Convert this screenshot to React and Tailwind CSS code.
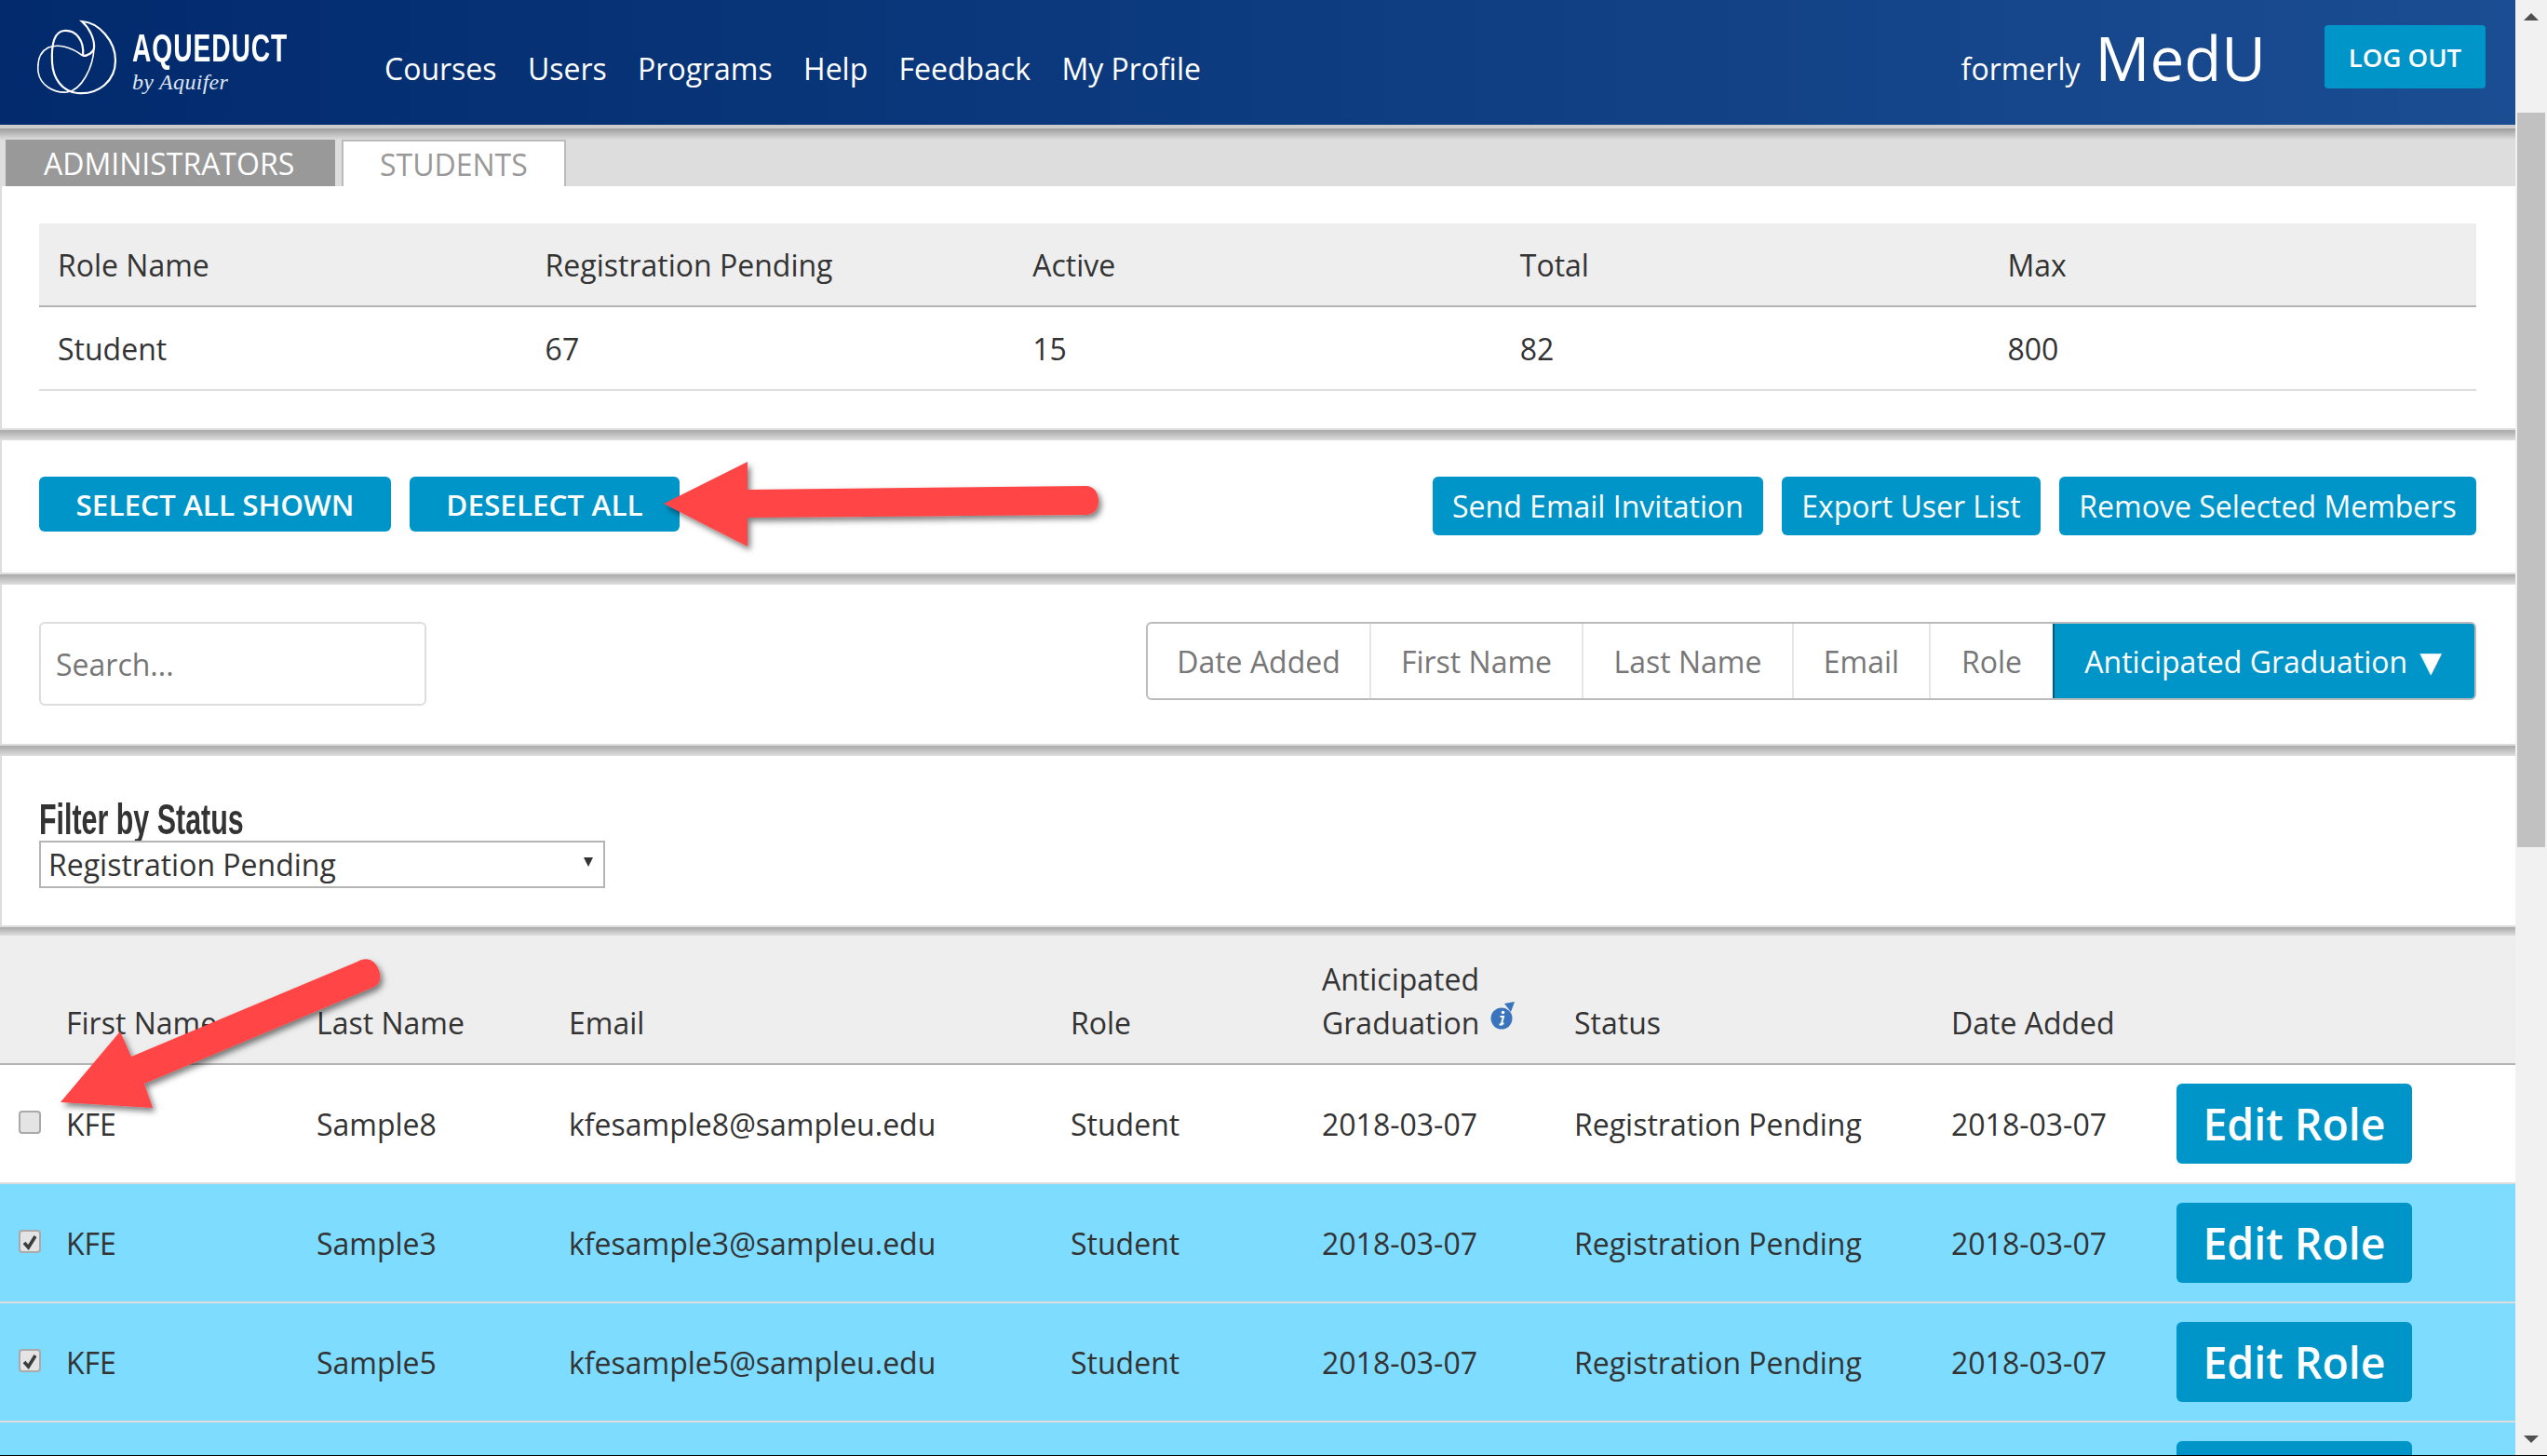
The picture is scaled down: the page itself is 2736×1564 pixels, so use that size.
import React from "react";

const Gap = ({ h = "h-[11px]" }) => (
  <div className={`${h} bg-gradient-to-b from-[#a9a9a9] to-[#dedede]`} />
);

const Panel = ({ className = "", children }) => (
  <section className={`bg-white border-l-2 border-b-2 border-[#dddddd] ${className}`}>{children}</section>
);

const Logo = () => (
  <div className="flex items-start w-[373px] ml-[40px] pt-[20px] h-full">
    <svg width="88" height="84" viewBox="40 18 88 84" className="shrink-0" fill="none" stroke="#ffffff" aria-hidden="true">
      <path d="M89 58 C91 41 81 30 69 31 C58 32 55 46 56 65 C57 83 67 96 83 98 C106 100 124 85 124 63 C124 42 106 22 88 21 C96 28 102 40 101 50 C100 54 95 58 89 58" strokeWidth="2.2" />
      <path d="M89 58 C76 48 62 45 52 49 C42 54 40 65 41 75 C43 90 58 98 72 97 C88 95 100 70 101 50" strokeWidth="1.6" />
    </svg>
    <div className="ml-[14px] text-white">
      <div className="font-['Liberation_Sans',sans-serif] font-bold text-[43px] leading-[44px] mt-[9px] tracking-[1.4px] whitespace-nowrap origin-left scale-x-[0.656]">AQUEDUCT</div>
      <div className="font-['Liberation_Serif',serif] italic text-[24px] leading-[30px] tracking-[0.3px] text-[#dfe6f2] whitespace-nowrap">by Aquifer</div>
    </div>
  </div>
);

const Header = () => (
  <header className="h-[134px] bg-gradient-to-r from-[#022a6d] to-[#1b4d92] flex text-white">
    <Logo />
    <nav className="flex gap-[33.3px] pt-[50px] leading-[47px]">
      {["Courses", "Users", "Programs", "Help", "Feedback", "My Profile"].map((n) => (
        <a key={n} className="whitespace-nowrap">{n}</a>
      ))}
    </nav>
    <div className="ml-auto flex items-start pr-[32px]">
      <span className="mt-[50px] leading-[47px] mr-[16px]">formerly</span>
      <span className="mt-[18px] text-[65.5px] leading-[88px] mr-[63px]">MedU</span>
      <button className="mt-[27px] w-[173px] h-[68px] rounded-[4px] bg-[#0095c8] font-semibold text-[27.5px] text-white">LOG OUT</button>
    </div>
  </header>
);

const Tabs = () => (
  <div className="h-[66px] bg-[#dddddd] flex flex-col">
    <div className="h-[4px] bg-[#cccccc]" />
    <div className="h-[12px] bg-gradient-to-b from-[#9d9d9d] to-[#dddddd]" />
    <div className="h-[50px] flex items-end pl-[6px] gap-[7px] leading-[47px]">
      <div className="w-[354px] h-[50px] bg-[#999999] text-white pl-[41px] flex items-center">ADMINISTRATORS</div>
      <div className="w-[241px] h-[50px] bg-white border-x-2 border-t-2 border-[#bbbbbb] text-[#999999] pl-[39px] flex items-center">STUDENTS</div>
    </div>
  </div>
);

const SummaryTable = () => (
  <Panel className="pl-[40px] pr-[42px] py-[40px] h-[262px]">
    <div className="grid grid-cols-5 h-[90px] items-center bg-[#eeeeee] border-b-2 border-[#b3b3b3]">
      {["Role Name", "Registration Pending", "Active", "Total", "Max"].map((h) => (
        <div key={h} className="pl-[20px]">{h}</div>
      ))}
    </div>
    <div className="grid grid-cols-5 h-[90px] items-center border-b-2 border-[#dddddd]">
      {["Student", "67", "15", "82", "800"].map((c) => (
        <div key={c} className="pl-[20px]">{c}</div>
      ))}
    </div>
  </Panel>
);

const ActionBtn = ({ className = "", children }) => (
  <button className={`rounded-[6px] bg-[#0095c8] text-white whitespace-nowrap ${className}`}>{children}</button>
);

const Actions = () => (
  <Panel className="h-[144px] pl-[40px] pr-[42px] pt-[39px] flex items-start">
    <ActionBtn className="w-[378px] h-[59px] font-semibold text-[31.5px]">SELECT ALL SHOWN</ActionBtn>
    <ActionBtn className="w-[290px] h-[59px] ml-[20px] font-semibold text-[31.5px]">DESELECT ALL</ActionBtn>
    <div className="ml-auto flex gap-[20px]">
      <ActionBtn className="w-[355px] h-[63px]">Send Email Invitation</ActionBtn>
      <ActionBtn className="w-[278px] h-[63px]">Export User List</ActionBtn>
      <ActionBtn className="w-[448px] h-[63px]">Remove Selected Members</ActionBtn>
    </div>
  </Panel>
);

const SortBtn = ({ w, children }) => (
  <div className={`${w} h-full flex items-center justify-center border-r-2 border-[#e6e6e6] text-[#777777]`}>{children}</div>
);

const SearchSort = () => (
  <Panel className="h-[173px] pl-[40px] pr-[42px] pt-[40px] flex items-start justify-between">
    <input
      placeholder="Search..."
      className="w-[416px] h-[90px] border-2 border-[#dddddd] rounded-[6px] px-[16px] outline-none placeholder:text-[#777777]"
    />
    <div className="flex h-[84px] w-[1429px] rounded-[6px] border-2 border-[#bbbbbb] bg-white overflow-hidden">
      <SortBtn w="w-[240px]">Date Added</SortBtn>
      <SortBtn w="w-[228px]">First Name</SortBtn>
      <SortBtn w="w-[226px]">Last Name</SortBtn>
      <SortBtn w="w-[147px]">Email</SortBtn>
      <div className="w-[131px] h-full flex items-center justify-center text-[#777777]">Role</div>
      <div className="flex-1 -my-[2px] -mr-[2px] pl-[5px] flex items-center justify-center gap-[5px] bg-[#0095c8] border-2 border-[#005a80] text-white rounded-r-[6px]">
        <span>Anticipated Graduation</span>
        <span className="text-[40px] leading-[40px]">▼</span>
      </div>
    </div>
  </Panel>
);

const Filter = () => (
  <Panel className="h-[184px] pl-[40px] pt-[45px]">
    <h2 className="font-['Liberation_Sans',sans-serif] font-bold text-[47px] leading-[46px] text-[#333333] whitespace-nowrap origin-left scale-x-[0.647]">Filter by Status</h2>
    <div className="relative w-[608px] h-[51px]">
      <select className="appearance-none w-full h-full border-2 border-[#b5b5b5] pl-[8px] bg-white text-[#333333] outline-none" defaultValue="p">
        <option value="p">Registration Pending</option>
      </select>
      <svg className="absolute right-[12px] top-[17px]" width="12" height="12" viewBox="0 0 12 12" aria-hidden="true">
        <path d="M1 1 H11 L6 11 Z" fill="#333333" />
      </svg>
    </div>
  </Panel>
);

const Info = () => (
  <svg className="absolute left-full top-[-3px] ml-[12px]" width="30" height="34" viewBox="0 0 30 34" aria-hidden="true">
    <circle cx="12" cy="20" r="11.5" fill="#3a74bd" />
    <path d="M15 4 L26 2 L22 13 Z" fill="#3a74bd" />
    <circle cx="13.5" cy="13.5" r="1.8" fill="#ffffff" />
    <path d="M10.5 18 H14 L12 25.5 H14.5 M9.5 26.5 H13" stroke="#ffffff" strokeWidth="2" fill="none" />
  </svg>
);

const Check = ({ checked }) => (
  <div role="checkbox" aria-checked={checked} className="w-[24px] h-[25px] rounded-[4px] border-2 border-[#a9a9a9] bg-[#e4e4e4] ml-[20px] -mt-[3px] flex items-center justify-center">
    {checked && (
      <svg width="18" height="18" viewBox="0 0 18 18" aria-hidden="true">
        <path d="M3 10 L7.5 15 L15 3" stroke="#3c3c3c" strokeWidth="3.6" fill="none" />
      </svg>
    )}
  </div>
);

const userCols = "grid grid-cols-[50px_269px_271px_539px_270px_271px_405px_242px_385px]";

const rows = [
  { last: "Sample8", email: "kfesample8@sampleu.edu", checked: false },
  { last: "Sample3", email: "kfesample3@sampleu.edu", checked: true },
  { last: "Sample5", email: "kfesample5@sampleu.edu", checked: true },
];

const UserTable = () => (
  <div>
    <div className={`${userCols} h-[139px] items-end pb-[20px] bg-[#eeeeee] border-b-2 border-[#b3b3b3]`}>
      <div />
      {["First Name", "Last Name", "Email", "Role"].map((h) => (
        <div key={h} className="pl-[21px]">{h}</div>
      ))}
      <div className="pl-[21px]">
        Anticipated<br /><span className="relative">Graduation<Info /></span>
      </div>
      <div className="pl-[21px]">Status</div>
      <div className="pl-[21px]">Date Added</div>
      <div />
    </div>
    {rows.map((r) => (
      <div key={r.last} className={`${userCols} h-[128px] items-center border-b-2 border-[#dddddd] ${r.checked ? "bg-[#7ddcff]" : "bg-white"}`}>
        <Check checked={r.checked} />
        <div className="pl-[21px]">KFE</div>
        <div className="pl-[21px]">{r.last}</div>
        <div className="pl-[21px]">{r.email}</div>
        <div className="pl-[21px]">Student</div>
        <div className="pl-[21px]">2018-03-07</div>
        <div className="pl-[21px]">Registration Pending</div>
        <div className="pl-[21px]">2018-03-07</div>
        <div className="pl-[21px]">
          <button className="w-[253px] h-[86px] rounded-[6px] bg-[#0095c8] text-white font-semibold text-[46.5px] leading-none whitespace-nowrap">Edit Role</button>
        </div>
      </div>
    ))}
    <div className={`${userCols} h-[128px] bg-[#7ddcff] pt-[20px]`}>
      <div className="col-start-9 pl-[21px]">
        <div className="w-[253px] h-[86px] rounded-[6px] bg-[#0095c8]" />
      </div>
    </div>
  </div>
);

const Scrollbar = () => (
  <aside className="w-[34px] shrink-0 bg-[#f1f1f1] flex flex-col items-center">
    <svg className="mt-[14px]" width="16" height="8" viewBox="0 0 16 8" aria-hidden="true"><path d="M8 0 L16 8 H0 Z" fill="#505050" /></svg>
    <div className="mt-[99px] w-[30px] h-[789px] bg-[#c1c1c1]" />
    <svg className="mt-auto mb-[14px]" width="16" height="8" viewBox="0 0 16 8" aria-hidden="true"><path d="M0 0 H16 L8 8 Z" fill="#505050" /></svg>
  </aside>
);

const Arrows = () => (
  <svg className="absolute left-0 top-0 pointer-events-none" width="2736" height="1564" viewBox="0 0 2736 1564" aria-hidden="true">
    <defs>
      <filter id="arrowShadow" x="-20%" y="-20%" width="140%" height="140%">
        <feDropShadow dx="3" dy="4" stdDeviation="3" floodColor="#000000" floodOpacity="0.5" />
      </filter>
    </defs>
    <g fill="#ff4545" filter="url(#arrowShadow)">
      <path d="M713 541 L803 496 L803 526 L1166 522 C1176 522 1180 530 1180 538 C1180 546 1176 553 1166 553 L803 556 L803 587 Z" />
      <path d="M65 1184 L129 1108 L141 1135 L384 1033 C392 1028 402 1030 406 1040 C410 1048 409 1056 402 1060 L155 1164 L164 1190 Z" />
    </g>
  </svg>
);

export default function App() {
  return (
    <div className="relative h-screen w-screen overflow-hidden flex bg-white text-[32px] leading-[47px] text-[#333333] font-['Open_Sans',sans-serif]">
      <main className="w-[2702px] shrink-0 overflow-hidden">
        <Header />
        <Tabs />
        <SummaryTable />
        <Gap />
        <Actions />
        <Gap />
        <SearchSort />
        <Gap />
        <Filter />
        <Gap h="h-[9px]" />
        <UserTable />
      </main>
      <Scrollbar />
      <Arrows />
      <div className="absolute left-0 right-0 bottom-0 h-px bg-black" />
    </div>
  );
}
